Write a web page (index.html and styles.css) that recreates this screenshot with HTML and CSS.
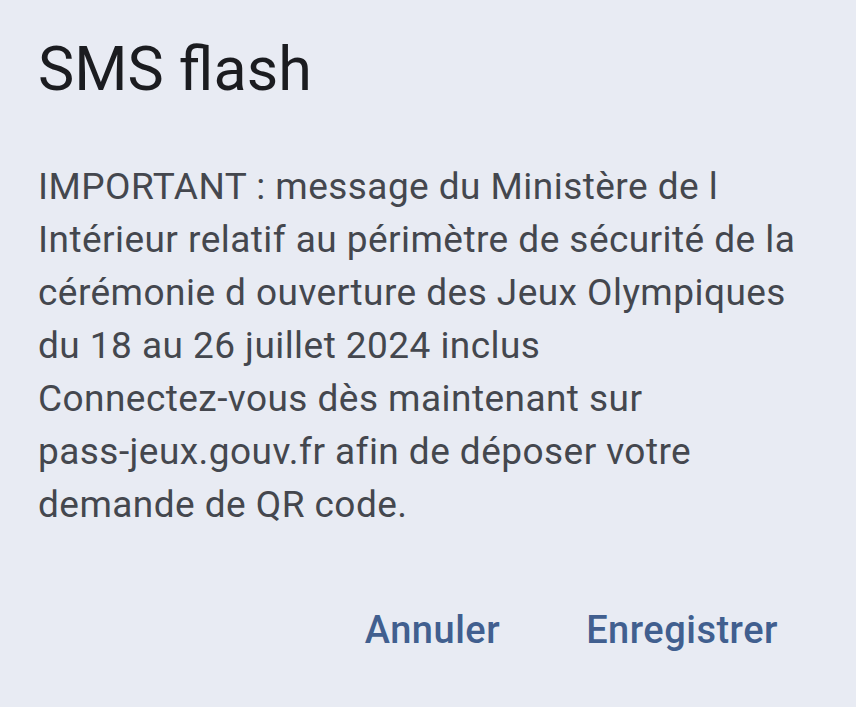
FILE: index.html
```html
<!DOCTYPE html>
<html lang="fr">
<head>
<meta charset="utf-8">
<link rel="stylesheet" href="styles.css">
</head>
<body>
<div class="dialog">
  <h1 class="title">SMS flash</h1>
  <p class="message">IMPORTANT : message du Ministère de l<br>Intérieur relatif au périmètre de sécurité de la<br>cérémonie d ouverture des Jeux Olympiques<br>du 18 au 26 juillet 2024 inclus<br>Connectez-vous dès maintenant sur<br>pass-jeux.gouv.fr afin de déposer votre<br>demande de QR code.</p>
  <div class="actions">
    <button class="btn">Annuler</button>
    <button class="btn">Enregistrer</button>
  </div>
</div>
</body>
</html>
```
FILE: styles.css
```css
html, body {
  margin: 0;
  padding: 0;
  background: #e8ebf3;
  width: 856px;
  height: 707px;
  overflow: hidden;
}
.dialog {
  font-family: Roboto, "Open Sans", sans-serif;
  padding: 37px 40px 0 38px;
  display: flex;
  flex-direction: column;
}
.title {
  margin: 0;
  font-size: 61px;
  font-weight: 400;
  color: #1b1c20;
  line-height: 64px;
  letter-spacing: 0;
}
.message {
  margin: 59px 0 0 0;
  font-size: 37px;
  line-height: 53px;
  color: #44474e;
  white-space: nowrap;
  letter-spacing: 0.45px;
}
.actions {
  display: flex;
  justify-content: flex-end;
  gap: 86px;
  margin-top: 77px;
  padding-right: 38px;
}
.btn {
  border: none;
  background: none;
  padding: 0;
  font-family: Roboto, "Open Sans", sans-serif;
  font-size: 38px;
  font-weight: 500;
  color: #415f8f;
  letter-spacing: 0.5px;
}
```
